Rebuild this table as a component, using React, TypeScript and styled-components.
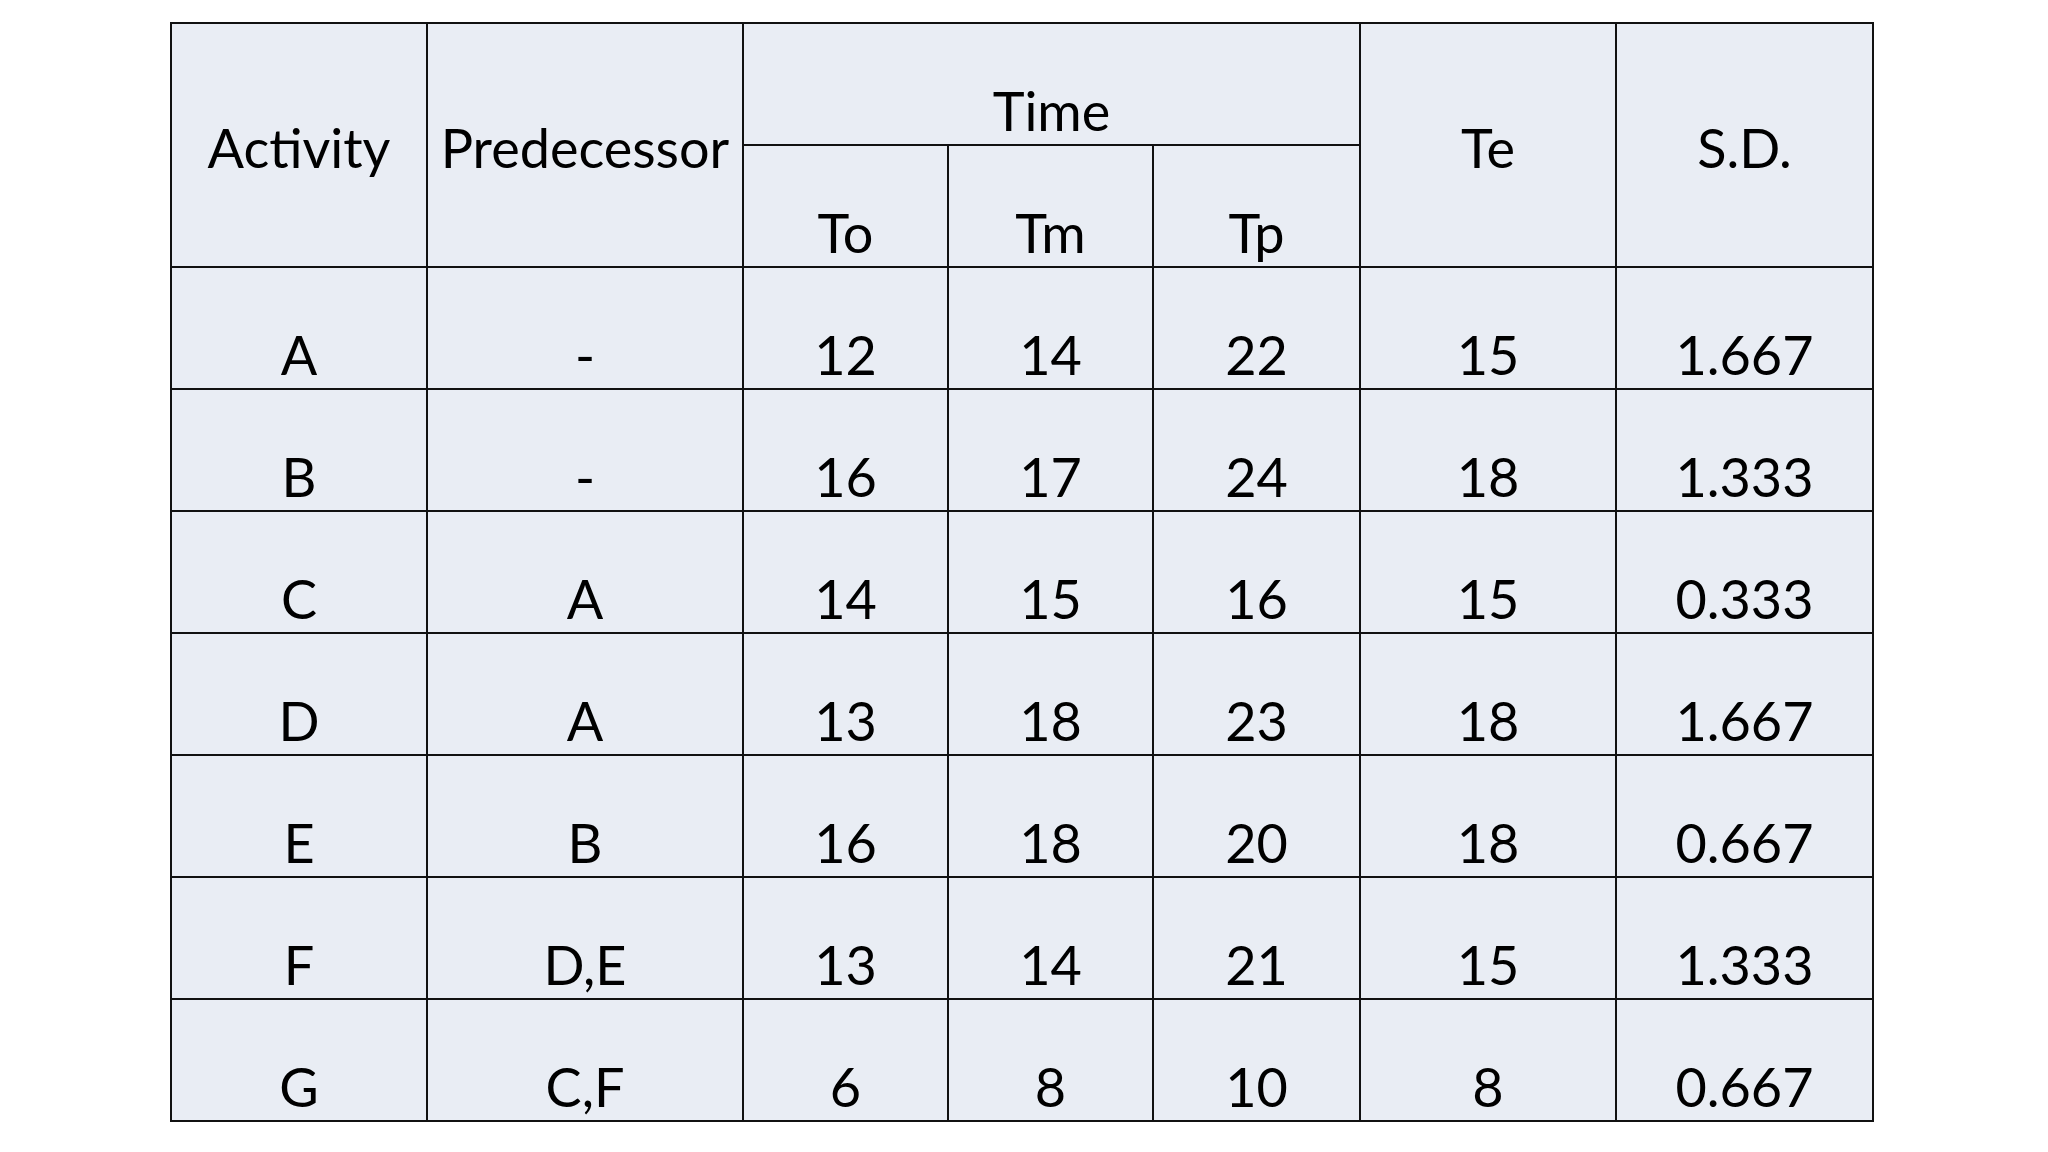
import React from 'react';
import styled, { createGlobalStyle } from 'styled-components';

const GlobalStyle = createGlobalStyle`
  html, body {
    margin: 0;
    padding: 0;
    background: #ffffff;
  }
  body {
    font-family: Lato, "Open Sans", sans-serif;
    color: #000000;
  }
`;

const Page = styled.div`
  width: 2048px;
  height: 1152px;
  padding: 22px 0 0 170px;
  box-sizing: border-box;
`;

const Grid = styled.div`
  display: grid;
  grid-template-columns: 254px 314px 203px 203px 205px 254px 255px;
  grid-template-rows: repeat(9, 120px);
  gap: 2px;
  padding: 2px;
  width: max-content;
  background: #111111;
`;

const Cell = styled.div<{ $rowSpan?: number; $colSpan?: number; $center?: boolean }>`
  grid-row: span ${(p) => p.$rowSpan ?? 1};
  grid-column: span ${(p) => p.$colSpan ?? 1};
  background: #e9edf4;
  display: flex;
  justify-content: center;
  align-items: ${(p) => (p.$center ? 'center' : 'flex-end')};
  padding-top: ${(p) => (p.$center ? '5px' : '0')};
  font-size: 54px;
  line-height: 1;
  white-space: nowrap;
  box-sizing: border-box;
`;

const CellText = styled.span`
  display: block;
  line-height: 66px;
`;

const rows = [
  ['A', '-', '12', '14', '22', '15', '1.667'],
  ['B', '-', '16', '17', '24', '18', '1.333'],
  ['C', 'A', '14', '15', '16', '15', '0.333'],
  ['D', 'A', '13', '18', '23', '18', '1.667'],
  ['E', 'B', '16', '18', '20', '18', '0.667'],
  ['F', 'D,E', '13', '14', '21', '15', '1.333'],
  ['G', 'C,F', '6', '8', '10', '8', '0.667'],
];

const App = () => (
  <>
    <GlobalStyle />
    <Page>
      <Grid>
        <Cell $rowSpan={2} $center>
          <CellText>Activity</CellText>
        </Cell>
        <Cell $rowSpan={2} $center>
          <CellText>Predecessor</CellText>
        </Cell>
        <Cell $colSpan={3}>
          <CellText>Time</CellText>
        </Cell>
        <Cell $rowSpan={2} $center>
          <CellText>Te</CellText>
        </Cell>
        <Cell $rowSpan={2} $center>
          <CellText>S.D.</CellText>
        </Cell>
        <Cell>
          <CellText>To</CellText>
        </Cell>
        <Cell>
          <CellText>Tm</CellText>
        </Cell>
        <Cell>
          <CellText>Tp</CellText>
        </Cell>
        {rows.map((row) =>
          row.map((v, i) => (
            <Cell key={row[0] + i}>
              <CellText>{v}</CellText>
            </Cell>
          ))
        )}
      </Grid>
    </Page>
  </>
);

export default App;
